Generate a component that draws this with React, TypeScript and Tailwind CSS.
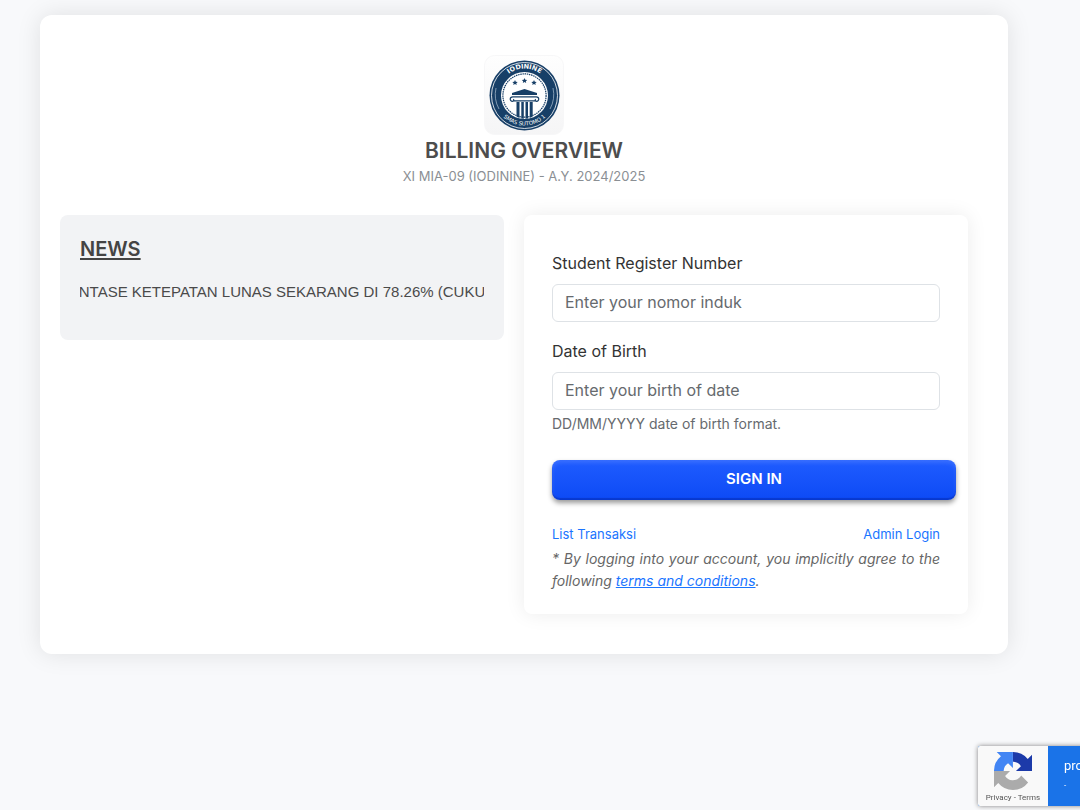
function Emblem() {
  return (
    <svg viewBox="0 0 80 80" className="block size-20" role="img" aria-label="Iodinine">
      <defs>
        <linearGradient id="tile" x1="0" y1="0" x2="0" y2="1">
          <stop offset="0" stopColor="#fefefe" />
          <stop offset="1" stopColor="#f5f5f6" />
        </linearGradient>
        <path id="arcTop" d="M14 40a26.500 26.500 0 0 1 53 0" />
        <path id="arcBottom" d="M10 40a30.500 30.500 0 0 0 61 0" />
      </defs>
      <rect x=".5" y=".5" width="79" height="79" rx="10" fill="url(#tile)" stroke="#f7f7f8" />
      <circle cx="40.500" cy="40.500" r="35" fill="#173f67" />
      <circle cx="40.500" cy="40.500" r="33" fill="none" stroke="#fff" strokeWidth=".8" />
      <circle cx="40.500" cy="40.500" r="23.500" fill="#fff" />
      <circle cx="40.500" cy="40.500" r="21.600" fill="#fff" stroke="#173f67" strokeWidth="1.200" strokeDasharray="1.500 .7" />
      <path d="M12 33a30 30 0 0 0 3 21M69 33a30 30 0 0 1-3 21" fill="none" stroke="#9db2c6" strokeWidth=".8" />
      <g fill="#fff" textAnchor="middle" fontFamily="DejaVu Sans, sans-serif">
        <text fontSize="6.500" fontWeight="700">
          <textPath href="#arcTop" startOffset="50%">IODININE</textPath>
        </text>
        <text fontSize="5.500">
          <textPath href="#arcBottom" startOffset="50%">SMAS SUTOMO 1</textPath>
        </text>
      </g>
      <g fill="#173f67">
        <path d="m40.500 23 .8 1.700 1.900.2-1.400 1.300.4 1.900-1.700-1-1.700 1 .4-1.900-1.400-1.300 1.900-.2z" />
        <path d="m31 25 .8 1.700 1.900.2-1.400 1.300.4 1.900-1.700-1-1.700 1 .4-1.900-1.400-1.300 1.900-.2z" />
        <path d="m50 25 .8 1.700 1.900.2-1.400 1.300.4 1.900-1.700-1-1.700 1 .4-1.900-1.400-1.300 1.900-.2z" />
        <path d="m40.500 34 12.500 4v2H28v-2z" />
        <path d="M32.500 47h3v16l-3-1.500zM37.300 47h2.500v16.800l-2.500-.3zM41.500 47H44v16.500l-2.500.3zM45.700 47h3v14.500l-3 1.500z" />
      </g>
      <path d="M30 45.800h21M28.800 41.900h23.500c3.200 0 3.200 4.400.2 4.400-1.600 0-1.800-1.700-.6-2M28.800 41.900c-3.400 0-3.400 4.400-.3 4.400 1.600 0 1.800-1.700.6-2" fill="none" stroke="#173f67" strokeWidth="1.200" />
    </svg>
  )
}

function RecaptchaLogo() {
  return (
    <svg viewBox="0 0 64 64" className="size-[38px]" aria-hidden="true">
      <path fill="#1c3aa9" d="M64 31.955a33 33 0 0 0-.037-1.380V4.640l-7.170 7.170A31.950 31.950 0 0 0 32.037.082a31.950 31.950 0 0 0-.2 0v16.300c.489 0 1.044.057 1.344.165a15.600 15.600 0 0 1 12.123 7.256l-8.320 8.320c10.537-.041 22.440-.066 27.016-.168" />
      <path fill="#4285f4" d="M31.862.094a33 33 0 0 0-1.380.037H4.547l7.170 7.170A31.950 31.950 0 0 0-.011 32.057h16.265c0-.489.057-.866.165-1.144a15.600 15.600 0 0 1 7.256-12.123l8.320 8.320c-.041-10.537-.066-22.440-.133-27.016" />
      <path fill="#ababab" d="M.001 32.057a33 33 0 0 0 .037 1.380v25.935l7.170-7.170A31.950 31.950 0 0 0 31.964 63.930a31.950 31.950 0 0 0 25.520-12.645L45.732 39.409a15.600 15.600 0 0 1-4.760 5.344c-2.053 1.602-4.961 2.912-9.008 2.912-.489 0-.866-.057-1.144-.165a15.600 15.600 0 0 1-12.123-7.256l8.320-8.320c-10.537.041-22.440.066-27.016.133" />
    </svg>
  )
}

const inputClass =
  'block h-[38px] w-full rounded-md border border-[#dee2e6] bg-white px-3 pb-0.5 text-base text-[#212529] placeholder:text-[#666a6e] outline-none focus:border-blue-400'

export default function App() {
  return (
    <div className="min-h-screen bg-[#f8f9fb] pt-[15px] pr-[72px] pb-20 pl-10 font-['Inter',sans-serif] text-[#333]">
      <main className="rounded-xl bg-white pt-10 pb-10 shadow-[0_0_24px_rgba(0,0,0,0.1)]">
        <header className="mb-[30px] flex flex-col items-center text-center">
          <Emblem />
          <h1 className="text-[21px] leading-8 font-semibold text-[#4d4d4d]">BILLING OVERVIEW</h1>
          <p className="text-[13px] leading-[18px] text-[#8b8f94]">XI MIA-09 (IODININE) - A.Y. 2024/2025</p>
        </header>

        <div className="grid grid-cols-2 items-start gap-5 pr-10 pl-5">
          <section className="min-w-0 rounded-lg bg-[#f2f3f5] p-5">
            <h2 className="text-xl leading-7 font-semibold text-[#444] underline decoration-2 underline-offset-2">NEWS</h2>
            <div className="mt-4 flex h-[41px] justify-center overflow-hidden font-['Liberation_Sans',sans-serif] text-[15px] leading-[26px] whitespace-nowrap text-[#4a4a4a]">
              <p>NTASE KETEPATAN LUNAS SEKARANG DI 78.26% (CUKU</p>
            </div>
          </section>

          <form
            className="min-w-0 rounded-lg bg-white px-7 pt-[37px] pb-[22px] shadow-[0_0_20px_rgba(0,0,0,0.08)]"
            onSubmit={(e) => e.preventDefault()}
          >
            <label htmlFor="nis" className="mb-2.5 block text-base leading-[22px]">Student Register Number</label>
            <input id="nis" type="text" placeholder="Enter your nomor induk" className={inputClass} />

            <label htmlFor="dob" className="mt-[18px] mb-2.5 block text-base leading-[22px]">Date of Birth</label>
            <input id="dob" type="text" placeholder="Enter your birth of date" aria-describedby="dobHelp" className={inputClass} />
            <p id="dobHelp" className="mt-1 text-sm leading-5 text-[#666a6e]">DD/MM/YYYY date of birth format.</p>

            <button
              type="submit"
              className="mt-[26px] flex h-10 w-[calc(100%+16px)] cursor-pointer items-center justify-center rounded-lg bg-linear-to-b from-[#1f5cff] to-[#0d4af5] pb-0.5 text-[15px] font-semibold text-white shadow-[inset_0_3px_4px_rgba(255,255,255,0.12),inset_0_-2px_1px_rgba(0,30,150,0.4),0_3px_5px_rgba(0,0,0,0.4)]"
            >
              SIGN IN
            </button>

            <div className="mt-6 flex justify-between text-[13px] leading-5 text-[#1a75ff]">
              <a href="#transaksi">List Transaksi</a>
              <a href="#admin">Admin Login</a>
            </div>
            <p className="mt-1 text-justify text-sm leading-[22px] text-[#666] italic">
              * By logging into your account, you implicitly agree to the following{' '}
              <a href="#terms" className="text-[#1a75ff] underline">terms and conditions</a>.
            </p>
          </form>
        </div>
      </main>

      <aside className="fixed -right-[154px] bottom-1 flex h-[60px] w-64 overflow-hidden rounded-xs bg-[#1a73e8] font-[Roboto,sans-serif] shadow-[0_0_5px_gray]">
        <div className="flex w-[70px] flex-col items-center bg-[#f9f9f9] pt-1.5">
          <RecaptchaLogo />
          <p className="mt-0.5 text-[8px] leading-3 whitespace-nowrap text-[#555]">
            <a href="#privacy">Privacy</a> - <a href="#recaptcha-terms">Terms</a>
          </p>
        </div>
        <div className="flex-1 pt-3 pl-4 text-white">
          <p className="text-[13px] leading-4 whitespace-nowrap">protected by reCAPTCHA</p>
          <p className="mt-1 text-[8px] leading-4">-</p>
        </div>
      </aside>
    </div>
  )
}
